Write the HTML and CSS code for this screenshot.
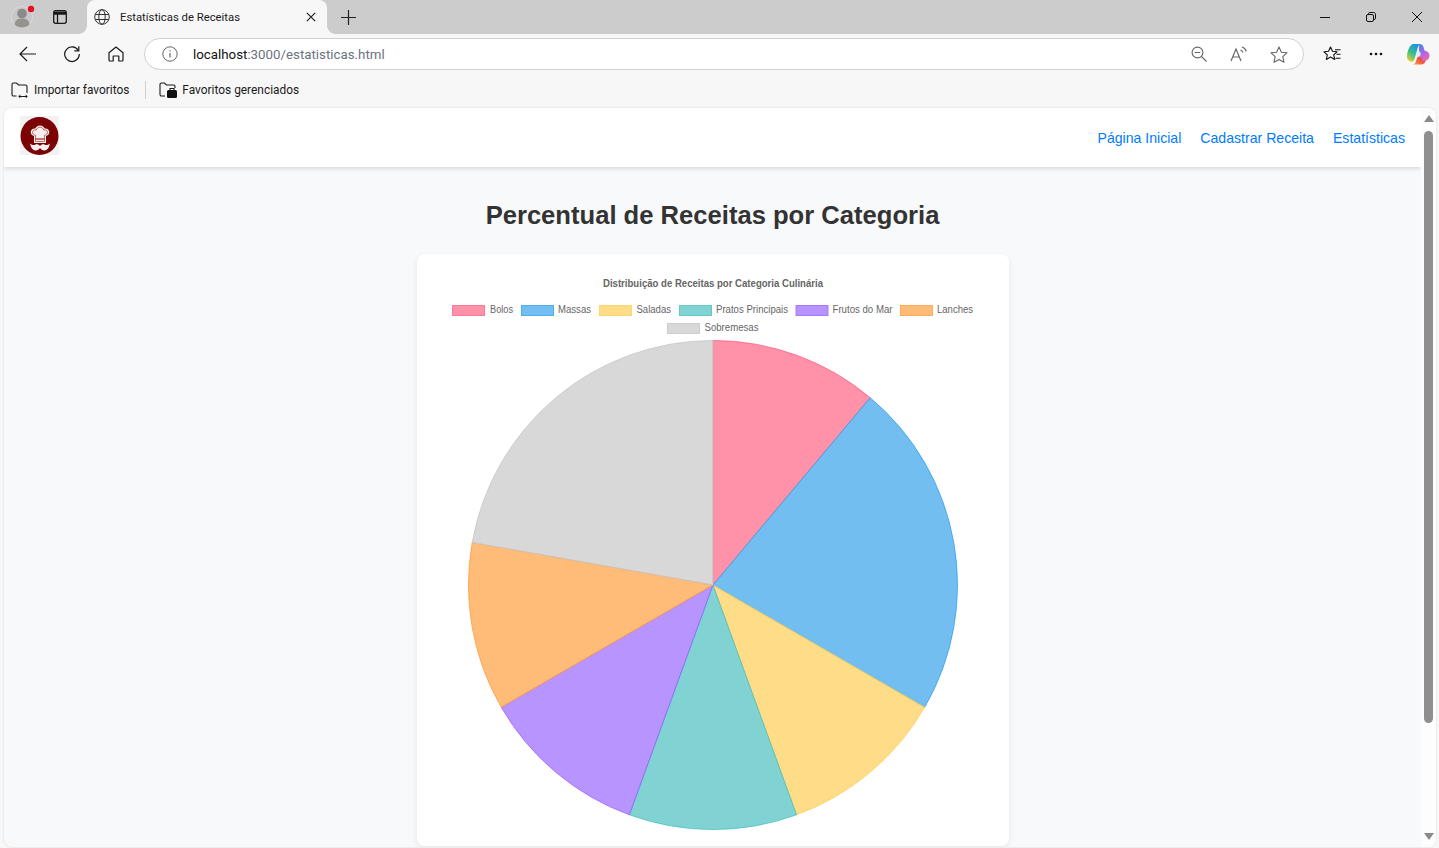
FILE: index.html
```html
<!DOCTYPE html>
<html lang="pt-BR">
<head>
<meta charset="utf-8">
<title>Estatísticas de Receitas</title>
<link rel="stylesheet" href="styles.css">
</head>
<body>

<div class="tabstrip">
  <div class="profile">
    <svg width="24" height="24" viewBox="0 0 24 24"><circle cx="11" cy="13" r="10.5" fill="#c8c8c8" stroke="#dadada"/><circle cx="11" cy="9.500" r="4.800" fill="#8c8a88"/><path d="M3.500 20.500c.6-4.500 3.500-6 7.500-6s6.900 1.500 7.500 6c-2 2-4.500 3-7.500 3s-5.500-1-7.500-3z" fill="#96928e"/><circle cx="20" cy="5" r="3.200" fill="#e81123"/></svg>
  </div>
  <div class="tabicon">
    <svg width="16" height="16" viewBox="0 0 16 16" fill="none" stroke="#1a1a1a" stroke-width="1.300"><rect x="1.700" y="1.700" width="12.600" height="12.600" rx="2"/><path d="M1.700 5h12.600M5.500 5v9.300" /><path d="M2 2.500h12V5H2z" fill="#1a1a1a" stroke="none"/></svg>
  </div>
  <div class="tab">
    <svg width="16" height="16" viewBox="0 0 16 16" fill="none" stroke="#333" stroke-width="1"><circle cx="8" cy="8" r="7.300"/><ellipse cx="8" cy="8" rx="3.200" ry="7.300"/><path d="M1.300 5.500h13.400M1.300 10.500h13.400"/></svg>
    <span class="tabtitle">Estatísticas de Receitas</span>
    <svg width="10" height="10" viewBox="0 0 10 10" stroke="#222" stroke-width="1.200"><path d="M.8.800l8.400 8.400M9.200.800L.8 9.200"/></svg>
  </div>
  <div class="newtab">
    <svg width="15" height="15" viewBox="0 0 15 15" stroke="#222" stroke-width="1.200"><path d="M7.500 0v15M0 7.500h15"/></svg>
  </div>
  <div class="winbtns">
    <svg width="10" height="10" viewBox="0 0 10 10" stroke="#111"><path d="M0 5.500h10"/></svg>
    <svg width="10" height="10" viewBox="0 0 10 10" fill="none" stroke="#111"><rect x=".5" y="2.500" width="7" height="7" rx="1.500"/><path d="M2.500 2.500V1.800C2.500 1 3 .5 3.800.5h4c1 0 1.700.7 1.700 1.700v4c0 .8-.5 1.300-1.300 1.300H7.500"/></svg>
    <svg width="10" height="10" viewBox="0 0 10 10" stroke="#111"><path d="M0 0l10 10M10 0L0 10"/></svg>
  </div>
</div>

<div class="toolbar">
  <button class="toolbtn first">
    <svg width="18" height="16" viewBox="0 0 18 16" fill="none" stroke="#1a1a1a" stroke-width="1.200"><path d="M17 8H1M8 1L1 8l7 7"/></svg>
  </button>
  <button class="toolbtn">
    <svg width="18" height="18" viewBox="0 0 18 18" fill="none" stroke="#1a1a1a" stroke-width="1.200"><path d="M15.300 5.500A7.300 7.300 0 1 0 16.300 9"/><path d="M15.800 1.300v4.500h-4.500"/></svg>
  </button>
  <button class="toolbtn">
    <svg width="16" height="16" viewBox="0 0 16 16" fill="none" stroke="#1a1a1a" stroke-width="1.200"><path d="M1 6.800L8 1l7 5.800V14a1 1 0 0 1-1 1h-3.200v-5H5.200v5H2a1 1 0 0 1-1-1z" stroke-linejoin="round"/></svg>
  </button>
  <div class="addressbar">
    <svg width="16" height="16" viewBox="0 0 16 16" fill="none" stroke="#666" stroke-width="1"><circle cx="8" cy="8" r="7.200"/><path d="M8 7v4.500M8 4.300v1.300" stroke-width="1.200"/></svg>
    <span class="url"><span class="host">localhost</span>:3000/estatisticas.html</span>
    <div class="addressicons">
      <svg class="zoomicon" width="16" height="16" viewBox="0 0 16 16" fill="none" stroke="#666" stroke-width="1.100"><circle cx="6.500" cy="6.500" r="5.400"/><path d="M3.800 6.500h5.400M10.500 10.500l5 5"/></svg>
      <svg width="18" height="16" viewBox="0 0 18 16" fill="none" stroke="#666" stroke-width="1.200"><path d="M1 15L6 3l5 12M2.800 11h6.400"/><path d="M10.500 4c1.200.4 2 1.300 2.300 2.500M12 1c2.200.6 3.700 2.200 4.200 4.500"/></svg>
      <svg width="18" height="17" viewBox="0 0 18 17" fill="none" stroke="#666" stroke-width="1.100" stroke-linejoin="round"><path d="M9 1l2.400 5.200 5.600.6-4.200 3.800 1.200 5.600L9 13.400 4 16.200l1.200-5.600L1 6.800l5.600-.6z"/></svg>
    </div>
  </div>
  <div class="rightbtns">
    <svg width="18" height="17" viewBox="0 0 18 17" fill="none" stroke="#111" stroke-width="1.100" stroke-linejoin="round"><path d="M7.500 1l2 4.300 4.500.5-3.300 3.100 1 4.600-4.200-2.400-4.200 2.400 1-4.600L1 5.800l4.500-.5z"/><path d="M12 3.800h5.500M13.500 8.300h4M12.500 12.300h5"/></svg>
    <svg class="dots" width="14" height="4" viewBox="0 0 14 4" fill="#111"><circle cx="2" cy="2" r="1.300"/><circle cx="7" cy="2" r="1.300"/><circle cx="12" cy="2" r="1.300"/></svg>
    <svg width="24" height="22" viewBox="0 0 24 22">
      <defs>
        <linearGradient id="copA" x1="0.700" y1="0" x2="0.200" y2="1"><stop offset="0" stop-color="#1c8fe8"/><stop offset=".55" stop-color="#35c48c"/><stop offset="1" stop-color="#f4cb2a"/></linearGradient>
        <linearGradient id="copB" x1="0.200" y1="0" x2="0.800" y2="1"><stop offset="0" stop-color="#3f86ee"/><stop offset=".45" stop-color="#a868e8"/><stop offset="1" stop-color="#ee6aa8"/></linearGradient>
        <linearGradient id="copC" x1="0" y1="1" x2="1" y2="0"><stop offset="0" stop-color="#f9a03a"/><stop offset=".6" stop-color="#ee4a4a"/><stop offset="1" stop-color="#e060a0"/></linearGradient>
      </defs>
      <path d="M7.500 1H14c-1 .5-1.600 1.500-2 3L8.500 16c-.6 2-2 3-4 2.500C2 18 1 16 1 13.500 1 8 4 1 7.500 1z" fill="url(#copA)"/>
      <path d="M13 1c2.500 0 4 1 4.500 3l1 3.500c3 .8 5 2.500 5 5 0 3-2 5-4.500 5h-3.500L13 9z" fill="url(#copB)"/>
      <path d="M7 21.500h8c2.500 0 4-1.500 5-4.500l-3.500.5-2-4.500-3 1-1.500 4c-.6 2-1.500 3.500-3 3.500z" fill="url(#copC)"/>
      <path d="M11.500 8.500h2.500l1 3-1.500 1.500-3 .5z" fill="#dbeafd"/>
    </svg>
  </div>
</div>

<div class="favbar">
  <div class="fav">
    <svg width="18" height="16" viewBox="0 0 18 16" fill="none" stroke="#1a1a1a" stroke-width="1.100"><path d="M5.500 14H2.500A1.500 1.500 0 0 1 1 12.500V2.500A1.500 1.500 0 0 1 2.500 1h3L7.500 3h7A1.500 1.500 0 0 1 16 4.500V11"/><path d="M8 14.500h8M9.500 12.800L7.800 14.500l1.700 1.500M14.500 12.800l1.700 1.700-1.700 1.500" stroke-width="1"/></svg>
    Importar favoritos
  </div>
  <div class="favsep"></div>
  <div class="fav">
    <svg width="18" height="16" viewBox="0 0 18 16" fill="none" stroke="#1a1a1a" stroke-width="1.100"><path d="M6 14H2.500A1.500 1.500 0 0 1 1 12.500V2.500A1.500 1.500 0 0 1 2.500 1h3L7.500 3h7A1.500 1.500 0 0 1 16 4.500V6"/><rect x="8" y="8" width="10" height="8" rx="1.500" fill="#111" stroke="none"/><path d="M11 8V6.500h4V8"/></svg>
    Favoritos gerenciados
  </div>
</div>

<div class="viewport">
  <div class="page">
    <nav class="navbar">
      <svg class="logo" width="39" height="39" viewBox="0 0 39 39">
        <rect width="39" height="39" fill="#f3f1f1"/>
        <circle cx="19.500" cy="20" r="19" fill="#7c0303"/>
        <path d="M14 20c-2.500-.5-3.700-2.500-3.200-4.700.5-2 2.500-3.200 4.500-2.700 1-2 2.700-3.100 4.700-3.100s3.700 1.100 4.700 3.100c2-.5 4 .7 4.500 2.700.5 2.200-.7 4.200-3.200 4.700v7H14z" fill="#f8f0f0"/>
        <path d="M15.500 19.200c-2-.2-3.200-1.600-3-3.300.3-1.700 2-2.400 3.700-1.800.7-1.900 2.100-3 3.800-3s3.100 1.100 3.800 3c1.700-.6 3.400.1 3.700 1.800.2 1.700-1 3.100-3 3.300v6.300h-9z" fill="none" stroke="#a83a3a" stroke-width=".7"/>
        <path d="M15.500 23h9" stroke="#7c0303" stroke-width="1"/>
        <path d="M20 30c1.200-1.800 3-2.300 4.500-1.500 1.700.9 3.200.8 5.300-1-.3 3.800-2.700 7-5.300 7-2 0-3.500-1.200-4.500-2.500-1 1.300-2.500 2.500-4.500 2.500-2.600 0-5-3.200-5.300-7 2.100 1.800 3.600 1.900 5.300 1 1.500-.8 3.300-.3 4.500 1.500z" fill="#f8f0f0"/>
      </svg>
      <div class="navlinks">
        <a href="#">Página Inicial</a>
        <a href="#">Cadastrar Receita</a>
        <a href="#">Estatísticas</a>
      </div>
    </nav>
    <h1>Percentual de Receitas por Categoria</h1>
    <div class="card">
      <svg class="chart" width="592" height="592" viewBox="417 254 592 592">
        <text class="charttitle" x="603" y="287" textLength="220" lengthAdjust="spacingAndGlyphs">Distribuição de Receitas por Categoria Culinária</text>

        <rect class="s1" x="452.500" y="305.500" width="32" height="10"/><text class="legend" x="490" y="313" textLength="23" lengthAdjust="spacingAndGlyphs">Bolos</text>
        <rect class="s2" x="521.500" y="305.500" width="32" height="10"/><text class="legend" x="558" y="313" textLength="33" lengthAdjust="spacingAndGlyphs">Massas</text>
        <rect class="s3" x="599.500" y="305.500" width="32" height="10"/><text class="legend" x="636.500" y="313" textLength="34.500" lengthAdjust="spacingAndGlyphs">Saladas</text>
        <rect class="s4" x="679.500" y="305.500" width="32" height="10"/><text class="legend" x="716" y="313" textLength="72" lengthAdjust="spacingAndGlyphs">Pratos Principais</text>
        <rect class="s5" x="796" y="305.500" width="32" height="10"/><text class="legend" x="832.500" y="313" textLength="60" lengthAdjust="spacingAndGlyphs">Frutos do Mar</text>
        <rect class="s6" x="900.500" y="305.500" width="32" height="10"/><text class="legend" x="937" y="313" textLength="36" lengthAdjust="spacingAndGlyphs">Lanches</text>
        <rect class="s7" x="667.500" y="323.500" width="32" height="10"/><text class="legend" x="704.500" y="331" textLength="54" lengthAdjust="spacingAndGlyphs">Sobremesas</text>

        <path class="s1" d="M713 585V340.500A244.500 244.500 0 0 1 870.200 397.700Z"/>
        <path class="s2" d="M713 585L870.200 397.700A244.500 244.500 0 0 1 924.700 707.300Z"/>
        <path class="s3" d="M713 585L924.700 707.300A244.500 244.500 0 0 1 796.600 814.800Z"/>
        <path class="s4" d="M713 585L796.600 814.800A244.500 244.500 0 0 1 629.400 814.800Z"/>
        <path class="s5" d="M713 585L629.400 814.800A244.500 244.500 0 0 1 501.300 707.300Z"/>
        <path class="s6" d="M713 585L501.300 707.300A244.500 244.500 0 0 1 472.200 542.500Z"/>
        <path class="s7" d="M713 585L472.200 542.500A244.500 244.500 0 0 1 713 340.500Z"/>
      </svg>
    </div>
  </div>
  <div class="scrollbar">
    <div class="arrow up"></div>
    <div class="thumb"></div>
    <div class="arrow down"></div>
  </div>
</div>

</body>
</html>
```

FILE: styles.css
```css
* {
    box-sizing: border-box;
}

html, body {
    margin: 0;
    height: 848px;
    overflow: hidden;
}

body {
    background: #f7f7f7;
    font-family: "Roboto", "Liberation Sans", sans-serif;
    color: #1a1a1a;
}

svg {
    display: block;
    flex-shrink: 0;
}

/* browser chrome */
.tabstrip {
    height: 34px;
    background: #cccccc;
    display: flex;
    align-items: center;
}

.profile {
    width: 24px;
    margin-left: 11px;
    margin-top: -2px;
}

.tabicon {
    margin-left: 17px;
}

.tab {
    position: relative;
    width: 240px;
    height: 34px;
    margin-left: 19px;
    background: #f7f7f7;
    border-radius: 8px 8px 0 0;
    display: flex;
    align-items: center;
    padding: 0 11px 0 7px;
    font-size: 11.3px;
}

/* the small flares at the foot of the tab */
.tab::before,
.tab::after {
    content: "";
    position: absolute;
    bottom: 0;
    width: 8px;
    height: 8px;
}

.tab::before {
    right: 100%;
    background: radial-gradient(circle at 0 0, #cccccc 7.5px, #f7f7f7 8px);
}

.tab::after {
    left: 100%;
    background: radial-gradient(circle at 100% 0, #cccccc 7.5px, #f7f7f7 8px);
}

.tabtitle {
    flex: 1;
    margin-left: 10px;
    white-space: nowrap;
}

.newtab {
    margin-left: 14px;
}

.winbtns {
    margin-left: auto;
    margin-right: 17px;
    display: flex;
    gap: 36px;
}

.toolbar {
    height: 38px;
    padding-top: 2px;
    display: flex;
    align-items: center;
}

.toolbtn {
    width: 44px;
    height: 30px;
    padding: 0;
    border: none;
    background: none;
    display: flex;
    align-items: center;
    justify-content: center;
}

.toolbtn.first {
    margin-left: 6px;
}

.addressbar {
    width: 1160px;
    height: 32px;
    margin-left: 6px;
    background: #fff;
    border: 1px solid #d0d0d0;
    border-radius: 16px;
    display: flex;
    align-items: center;
    padding-left: 17px;
}

.url {
    margin-left: 15px;
    font-size: 13.3px;
    color: #6b7280;
}

.host {
    color: #111;
}

.addressicons {
    margin-left: auto;
    margin-right: 15px;
    display: flex;
    align-items: center;
    gap: 22px;
}

.zoomicon {
    margin-right: 1px;
}

.rightbtns {
    display: flex;
    align-items: center;
    margin-left: 19px;
}

.dots {
    margin-left: 28px;
    margin-right: 23px;
}

.favbar {
    height: 36px;
    display: flex;
    align-items: center;
    padding-left: 11px;
    font-size: 11.9px;
}

.fav {
    display: flex;
    align-items: center;
    gap: 5px;
}

.favsep {
    width: 1px;
    height: 18px;
    background: #cfcfcf;
    margin: 0 13px 0 16px;
}

/* page */
.viewport {
    height: 739px;
    margin-left: 4px;
    margin-right: 3px;
    background: #f8f9fa;
    border-radius: 8px;
    overflow: hidden;
    display: flex;
    box-shadow: 0 0 2px rgba(0, 0, 0, 0.15);
}

.page {
    flex: 1;
    min-width: 0;
    overflow: hidden;
}

.navbar {
    height: 59px;
    background: #fff;
    box-shadow: 0 2px 4px rgba(0, 0, 0, 0.12);
    display: flex;
    align-items: center;
    justify-content: space-between;
    padding: 0 16px;
}

.logo {
    margin-bottom: 4px;
}

.navlinks {
    display: flex;
    gap: 19px;
    margin-top: 1px;
}

.navlinks a {
    font-family: "Liberation Sans", sans-serif;
    font-size: 14.1px;
    color: #007bff;
    text-decoration: none;
}

h1 {
    font-family: "Liberation Sans", sans-serif;
    font-size: 25.6px;
    font-weight: bold;
    color: #333;
    text-align: center;
    margin: 33px 0 24px;
    line-height: 30px;
}

.card {
    width: 592px;
    margin: 0 auto;
    background: #fff;
    border-radius: 8px;
    box-shadow: 0 2px 6px rgba(0, 0, 0, 0.08);
}

.charttitle {
    font-family: "Liberation Sans", sans-serif;
    font-size: 10px;
    font-weight: bold;
    fill: #666;
}

.legend {
    font-family: "Liberation Sans", sans-serif;
    font-size: 10px;
    fill: #666;
}

.s1 { fill: rgba(255, 99, 132, 0.7); stroke: rgba(255, 99, 132, 0.8); }
.s2 { fill: rgba(54, 162, 235, 0.7); stroke: rgba(54, 162, 235, 0.8); }
.s3 { fill: rgba(255, 206, 86, 0.7); stroke: rgba(255, 206, 86, 0.8); }
.s4 { fill: rgba(75, 192, 192, 0.7); stroke: rgba(75, 192, 192, 0.8); }
.s5 { fill: rgba(153, 102, 255, 0.7); stroke: rgba(153, 102, 255, 0.8); }
.s6 { fill: rgba(255, 159, 64, 0.7); stroke: rgba(255, 159, 64, 0.8); }
.s7 { fill: rgba(199, 199, 199, 0.7); stroke: rgba(199, 199, 199, 0.8); }

/* scrollbar */
.scrollbar {
    width: 15px;
    background: #fdfdfd;
    display: flex;
    flex-direction: column;
    align-items: center;
    padding-top: 7px;
}

.arrow {
    width: 0;
    height: 0;
    border-left: 5px solid transparent;
    border-right: 5px solid transparent;
}

.arrow.up {
    border-bottom: 7px solid #8a8a8a;
}

.arrow.down {
    border-top: 7px solid #8a8a8a;
    margin-top: 110px;
}

.thumb {
    width: 9px;
    height: 592px;
    margin-top: 9px;
    background: #8f8f8f;
    border-radius: 5px;
}
```
